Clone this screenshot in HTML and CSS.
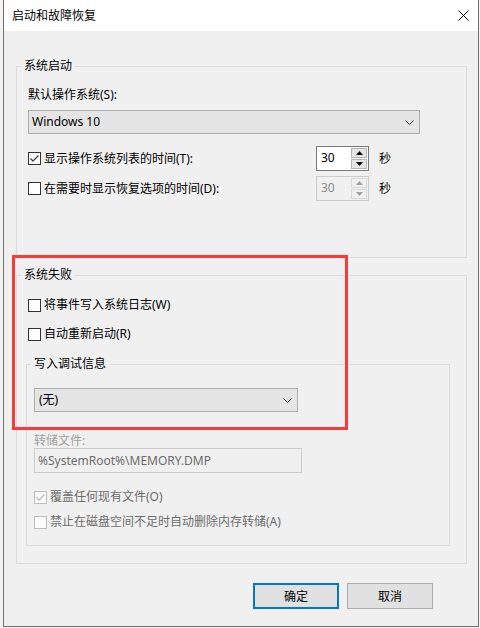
FILE: index.html
```html
<!DOCTYPE html>
<html lang="zh-CN">
<head>
<meta charset="utf-8">
<title>启动和故障恢复</title>
<link rel="stylesheet" href="styles.css">
</head>
<body>
<div class="window">
  <div class="titlebar">
    <span class="title">启动和故障恢复</span>
    <span class="close"><svg width="11" height="11" viewBox="0 0 11 11"><path d="M0.5 0.5 L10.5 10.5 M10.5 0.5 L0.5 10.5" stroke="#000" stroke-width="1" fill="none"/></svg></span>
  </div>
  <div class="content">
    <fieldset class="group g1">
      <legend>系统启动</legend>
      <div class="label">默认操作系统(S):</div>
      <div class="combo combo-os"><span>Windows 10</span><svg class="chev" width="9" height="5" viewBox="0 0 9 5"><polyline points="0.5,0.5 4.5,4.5 8.5,0.5" stroke="#333" fill="none"/></svg></div>
      <div class="timerow first">
        <div class="check timecheck"><span class="box"><svg width="11" height="11" viewBox="0 0 11 11"><polyline points="1.5,5.5 4,8 9.5,2.5" stroke="#444" stroke-width="1.3" fill="none"/></svg></span><span>显示操作系统列表的时间(T):</span></div>
        <div class="spin"><span class="val">30</span><span class="btns"><span class="sbtn"><svg width="7" height="4" viewBox="0 0 7 4"><polygon points="3.5,0 7,4 0,4" fill="#000"/></svg></span><span class="sbtn"><svg width="7" height="4" viewBox="0 0 7 4"><polygon points="0,0 7,0 3.5,4" fill="#000"/></svg></span></span></div>
        <span class="unit">秒</span>
      </div>
      <div class="timerow second">
        <div class="check timecheck"><span class="box"></span><span>在需要时显示恢复选项的时间(D):</span></div>
        <div class="spin disabled"><span class="val">30</span><span class="btns"><span class="sbtn"><svg width="7" height="4" viewBox="0 0 7 4"><polygon points="3.5,0 7,4 0,4" fill="#a0a0a0"/></svg></span><span class="sbtn"><svg width="7" height="4" viewBox="0 0 7 4"><polygon points="0,0 7,0 3.5,4" fill="#a0a0a0"/></svg></span></span></div>
        <span class="unit">秒</span>
      </div>
    </fieldset>

    <fieldset class="group g2">
      <legend>系统失败</legend>
      <div class="check row-w"><span class="box"></span><span>将事件写入系统日志(W)</span></div>
      <div class="check row-r"><span class="box"></span><span>自动重新启动(R)</span></div>
      <fieldset class="group g3">
        <legend>写入调试信息</legend>
        <div class="combo combo-debug"><span>(无)</span><svg class="chev" width="9" height="5" viewBox="0 0 9 5"><polyline points="0.5,0.5 4.5,4.5 8.5,0.5" stroke="#333" fill="none"/></svg></div>
        <div class="dis-label">转储文件:</div>
        <div class="textbox">%SystemRoot%\MEMORY.DMP</div>
        <div class="check disabled row-o"><span class="box"><svg width="11" height="11" viewBox="0 0 11 11"><polyline points="1.5,5.5 4,8 9.5,2.5" stroke="#bcbcbc" stroke-width="1.3" fill="none"/></svg></span><span>覆盖任何现有文件(O)</span></div>
        <div class="check disabled row-a"><span class="box"></span><span>禁止在磁盘空间不足时自动删除内存转储(A)</span></div>
      </fieldset>
    </fieldset>

    <div class="buttons">
      <button class="btn default">确定</button>
      <button class="btn">取消</button>
    </div>
  </div>
  <div class="highlight"></div>
</div>
</body>
</html>
```

FILE: styles.css
```css
html, body {
  margin: 0;
  padding: 0;
}
body {
  width: 480px;
  height: 628px;
  overflow: hidden;
  background: #f3f3f3;
  font-family: "Noto Sans", "Noto Sans CJK SC", sans-serif;
  font-size: 12px;
  color: #000;
}
.window {
  position: relative;
  margin-left: 3px;
  width: 476px;
  box-sizing: border-box;
  border: 1px solid #6e6e6e;
  border-top: none;
  background: #f0f0f0;
}
.titlebar {
  height: 31px;
  background: #fff;
  display: flex;
  align-items: center;
  justify-content: space-between;
  padding: 0 9px 0 8px;
}
.title {
  font-size: 12px;
  line-height: 16px;
  padding-top: 1px;
}
.close {
  display: flex;
  width: 11px;
  height: 11px;
}
.content {
  display: flex;
  flex-direction: column;
  padding-bottom: 17px;
}
.group {
  margin: 0;
  padding: 0;
  min-width: 0;
  border: 1px solid #dcdcdc;
}
.group legend {
  margin-left: 4px;
  padding: 0 3px;
  line-height: 16px;
  font-size: 12px;
}
.g1 {
  margin: 27px 11px 0 12px;
  padding-bottom: 56px;
}
.label {
  margin: 13px 0 0 11px;
  line-height: 16px;
}
.combo {
  box-sizing: border-box;
  height: 24px;
  background: #e5e5e5;
  border: 1px solid #adadad;
  display: flex;
  align-items: center;
  justify-content: space-between;
  padding: 0 5px 0 3px;
  line-height: 16px;
}
.combo-os {
  margin: 7px 0 0 11px;
  width: 392px;
}
.timerow {
  display: flex;
  align-items: center;
  height: 25px;
  margin-left: 11px;
}
.timerow.first { margin-top: 12px; }
.timerow.second { margin-top: 5px; }
.check {
  display: flex;
  align-items: center;
  gap: 3px;
  line-height: 16px;
  height: 16px;
}
.timecheck {
  width: 288px;
  flex: none;
}
.box {
  box-sizing: border-box;
  width: 13px;
  height: 13px;
  border: 1px solid #333;
  background: #fff;
  display: flex;
  align-items: center;
  justify-content: center;
  flex: none;
}
.check.disabled { color: #6d6d6d; }
.check.disabled .box { border-color: #bcbcbc; background: #fbfbfb; }
.spin {
  box-sizing: border-box;
  width: 53px;
  height: 25px;
  border: 1px solid #7a7a7a;
  background: #fff;
  display: flex;
  flex: none;
}
.spin .val {
  flex: 1;
  padding-left: 4px;
  line-height: 22px;
}
.spin .btns {
  width: 16px;
  display: flex;
  flex-direction: column;
  gap: 1px;
  padding: 1px 1px 1px 0;
}
.sbtn {
  flex: 1;
  box-sizing: border-box;
  background: #e5e5e5;
  border: 1px solid #b5b5b5;
  display: flex;
  align-items: center;
  justify-content: center;
}
.spin.disabled {
  border-color: #cccccc;
  background: #f0f0f0;
  color: #8a8a8a;
}
.spin.disabled .sbtn {
  background: #f0f0f0;
  border-color: #d9d9d9;
}
.unit {
  margin-left: 10px;
  line-height: 16px;
}
.g2 {
  margin: 9px 11px 0 12px;
  padding-bottom: 17px;
}
.row-w { margin: 14px 0 0 11px; }
.row-r { margin: 13px 0 0 11px; }
.g3 {
  margin: 14px 16px 0 9px;
  padding-bottom: 15px;
}
.combo-debug {
  margin: 16px 0 0 7px;
  width: 264px;
  padding-left: 4px;
}
.dis-label {
  margin: 22px 0 0 7px;
  line-height: 14px;
  color: #a0a0a0;
}
.textbox {
  box-sizing: border-box;
  margin-left: 7px;
  width: 268px;
  height: 25px;
  border: 1px solid #cccccc;
  background: #f0f0f0;
  color: #6d6d6d;
  padding-left: 3px;
  line-height: 23px;
}
.row-o { margin: 16px 0 0 7px; }
.row-a { margin: 9px 0 0 7px; }
.buttons {
  display: flex;
  justify-content: flex-end;
  gap: 8px;
  margin-top: 19px;
  padding-right: 45px;
}
.btn {
  box-sizing: border-box;
  width: 86px;
  height: 26px;
  background: #e1e1e1;
  border: 1px solid #adadad;
  font-family: "Noto Sans", "Noto Sans CJK SC", sans-serif;
  font-size: 12px;
  color: #000;
  padding: 0;
  margin: 0;
}
.btn.default {
  border: 2px solid #0078d7;
}
.highlight {
  position: absolute;
  left: 8px;
  top: 255px;
  width: 336px;
  height: 175px;
  box-sizing: border-box;
  border: 3px solid #f43c3c;
}
```
